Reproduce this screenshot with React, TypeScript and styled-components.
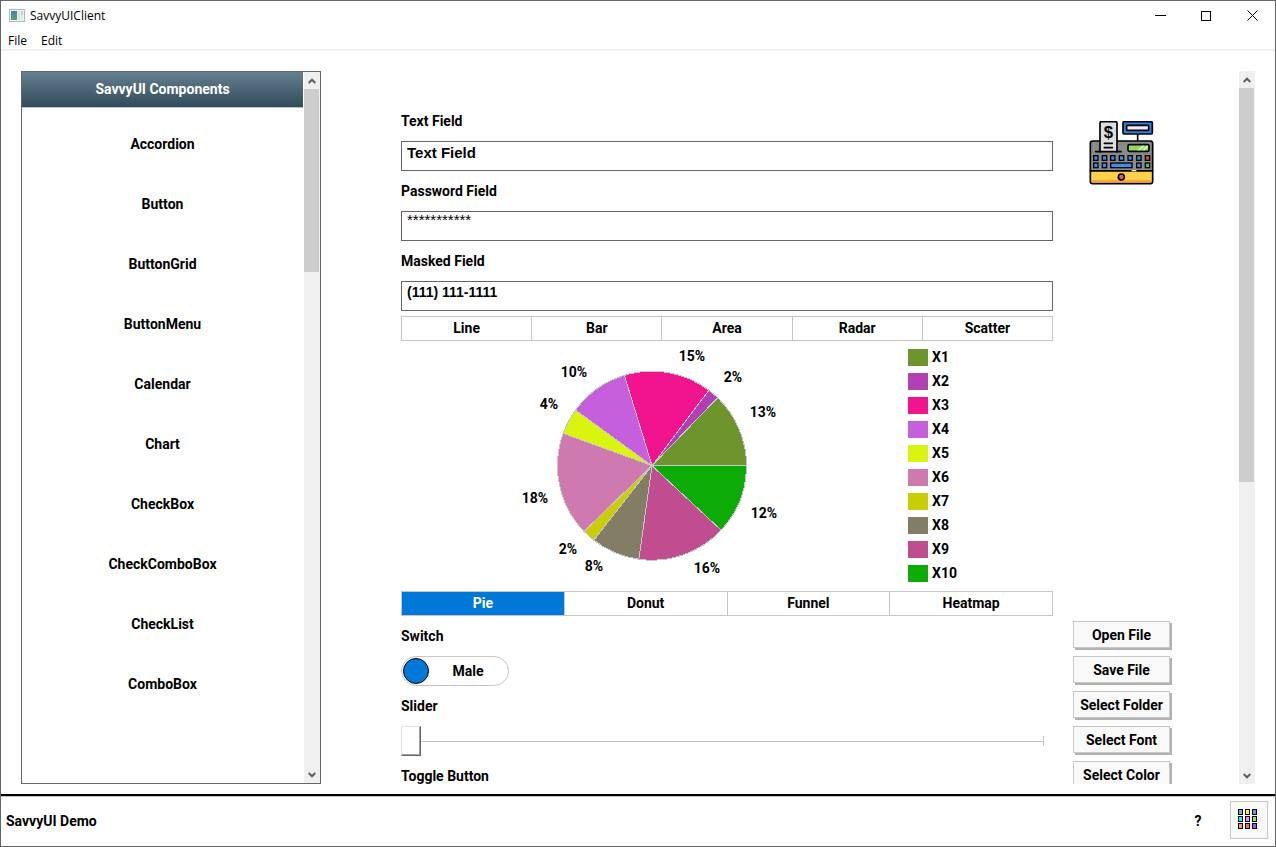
import React, { useState } from 'react';
import styled, { createGlobalStyle } from 'styled-components';

const line = '#c6c6c6';
const frame = '#666666';

const GlobalStyle = createGlobalStyle`
  *, *::before, *::after { box-sizing: border-box; }
  body { margin: 0; background: #fff; }
  button, input { font: inherit; color: inherit; margin: 0; padding: 0; border-radius: 0; }
`;

const Window = styled.div`
  display: flex;
  flex-direction: column;
  height: 100vh;
  border: 1px solid ${frame};
  background: #fff;
  color: #000;
  font: bold 14px/20px Roboto, "Liberation Sans", sans-serif;
`;

const TitleBar = styled.header`
  display: flex;
  align-items: center;
  height: 29px;
  padding-left: 8px;
  font: 12px/16px "Open Sans", "Noto Sans", sans-serif;
`;

const Title = styled.h1`
  flex: 1;
  margin: 0 0 0 5px;
  font: inherit;
`;

const WindowButton = styled.button`
  display: flex;
  align-items: center;
  justify-content: center;
  width: 46px;
  height: 29px;
  border: 0;
  background: none;
`;

const MenuBar = styled.nav`
  display: flex;
  gap: 14px;
  height: 21px;
  padding: 0 7px;
  border-bottom: 2px solid #f0f0f0;
  font: 12px/20px "Open Sans", "Noto Sans", sans-serif;
`;

const MenuButton = styled.button`
  height: 21px;
  border: 0;
  background: none;
`;

const Body = styled.div`
  display: flex;
  flex: 1;
  gap: 20px;
  min-height: 0;
  padding: 20px 20px 10px;
`;

const Sidebar = styled.aside`
  display: flex;
  flex: 0 0 300px;
  gap: 1px;
  border: 1px solid ${frame};
`;

const SidebarContent = styled.div`
  flex: 1;
  overflow: hidden;
  text-align: center;
`;

const SidebarTitle = styled.h2`
  height: 36px;
  margin: 0;
  border-bottom: 1px solid #b9c4ca;
  background: linear-gradient(#647f8e, #324b5a);
  color: #fff;
  font: inherit;
  line-height: 35px;
`;

const ComponentList = styled.ul`
  margin: 0;
  padding: 6px 0;
  list-style: none;
`;

const ComponentItem = styled.li`
  height: 60px;
  line-height: 60px;
`;

const ScrollTrack = styled.div`
  display: flex;
  flex-direction: column;
  flex: 0 0 16px;
  background: #f0f0f0;
`;

const ScrollButton = styled.button`
  display: flex;
  flex: 0 0 17px;
  align-items: center;
  justify-content: center;
  width: 15px;
  border: 0;
  background: none;
`;

const ScrollSpace = styled.div`
  flex: 1;
`;

const ScrollThumb = styled.div<{ $share: number }>`
  width: 15px;
  height: ${(p) => p.$share}%;
  background: #cdcdcd;
`;

const Main = styled.main`
  display: flex;
  flex: 1;
  min-width: 0;
`;

const Content = styled.div`
  display: grid;
  flex: 1;
  grid-template-columns: minmax(0, 1fr) 98px;
  align-content: start;
  column-gap: 20px;
  min-width: 0;
  padding: 30px 68px 0 60px;
  overflow: hidden;
`;

const Group = styled.section`
  min-width: 0;
`;

const FieldLabel = styled.label`
  display: block;
  line-height: 40px;
`;

const TextBox = styled.input<{ $size: number; $regular?: boolean }>`
  display: block;
  width: 100%;
  height: 30px;
  padding: 0 5px ${(p) => (p.$regular ? 14 : 8)}px;
  border: 1px solid ${frame};
  background: #fff;
  font: ${(p) => (p.$regular ? 'normal' : 'bold')} ${(p) => p.$size}px/20px "Liberation Sans", sans-serif;
`;

const Tabs = styled.div<{ $spaced?: boolean }>`
  display: flex;
  height: 25px;
  margin-top: ${(p) => (p.$spaced ? 5 : 0)}px;
  border: 1px solid ${line};
`;

const Tab = styled.button<{ $active?: boolean }>`
  flex: 1 1 0;
  padding-bottom: 1px;
  border: 0;
  background: ${(p) => (p.$active ? '#0078d7' : '#fff')};
  color: ${(p) => (p.$active ? '#fff' : '#000')};

  & + & { border-left: 1px solid ${line}; }
`;

const Chart = styled.div`
  display: flex;
  height: 250px;
`;

const PieArea = styled.div`
  display: flex;
  flex: 1;
  justify-content: center;
`;

const PieText = styled.text`
  text-anchor: middle;
  font: bold 14px Roboto, "Liberation Sans", sans-serif;
`;

const Legend = styled.ul`
  flex: 0 0 150px;
  margin: 0;
  padding: 4px 0 0 5px;
  list-style: none;
`;

const LegendItem = styled.li`
  display: flex;
  align-items: center;
  gap: 4px;
  height: 24px;
`;

const Swatch = styled.span<{ $color: string }>`
  width: 20px;
  height: 17px;
  background: ${(p) => p.$color};
`;

const Switch = styled.label<{ $on: boolean }>`
  position: relative;
  display: flex;
  flex-direction: ${(p) => (p.$on ? 'row-reverse' : 'row')};
  align-items: center;
  width: 108px;
  height: 30px;
  padding: 0 1px;
  border: 1px solid ${line};
  border-radius: 15px;
`;

const SwitchInput = styled.input`
  position: absolute;
  inset: 0;
  width: 100%;
  height: 100%;
  opacity: 0;
`;

const SwitchKnob = styled.span`
  width: 26px;
  height: 26px;
  border: 1px solid #000;
  border-radius: 50%;
  background: #0078d7;
`;

const SwitchText = styled.span`
  flex: 1;
  text-align: center;
`;

const SliderWrap = styled.div`
  padding-right: 9px;
`;

const Slider = styled.input`
  display: block;
  width: 100%;
  height: 30px;
  appearance: none;
  background:
    linear-gradient(${line}, ${line}) 0 15px / 100% 1px no-repeat,
    linear-gradient(${line}, ${line}) 100% 10px / 1px 10px no-repeat;

  &::-webkit-slider-thumb {
    appearance: none;
    width: 20px;
    height: 30px;
    border: 1px solid;
    border-color: #e3e3e3 #696969 #696969 #e3e3e3;
    background: #fff;
    box-shadow: inset -1px -1px #a0a0a0;
  }
`;

const Picture = styled.div`
  display: flex;
  justify-content: center;
  padding-top: 20px;
`;

const Actions = styled.div`
  display: flex;
  flex-direction: column;
  gap: 8px;
  padding: 5px 1px 0 0;
`;

const ActionButton = styled.button`
  height: 27px;
  border: 1px solid ${line};
  background: #f9f9f9;
  box-shadow: 2px 2px #b2b2b2;
  white-space: nowrap;
`;

const Footer = styled.footer`
  display: flex;
  align-items: center;
  height: 52px;
  padding: 0 7px 0 5px;
  border-top: 2px solid #000;
  box-shadow: inset 0 1px ${line};
`;

const FooterTitle = styled.span`
  flex: 1;
`;

const HelpButton = styled.button`
  width: 20px;
  height: 20px;
  margin-right: 22px;
  border: 0;
  background: none;
`;

const GridButton = styled.button`
  display: flex;
  align-items: center;
  justify-content: center;
  width: 38px;
  height: 38px;
  margin-bottom: 2px;
  padding: 0 4px 2px 0;
  border: 1px solid ${line};
  background: #f9f9f9;
`;

const components = [
  'Accordion', 'Button', 'ButtonGrid', 'ButtonMenu', 'Calendar',
  'Chart', 'CheckBox', 'CheckComboBox', 'CheckList', 'ComboBox',
];

// Each slice ends at `end` degrees, counter-clockwise from three o'clock.
const slices = [
  { name: 'X1', color: '#6e942e', share: '13%', end: 46, x: 261, y: 76 },
  { name: 'X2', color: '#b040b4', share: '2%', end: 53, x: 231, y: 41 },
  { name: 'X3', color: '#f2148f', share: '15%', end: 107, x: 190, y: 20 },
  { name: 'X4', color: '#c65fdc', share: '10%', end: 144, x: 72, y: 36 },
  { name: 'X5', color: '#daf410', share: '4%', end: 160, x: 47, y: 68 },
  { name: 'X6', color: '#cf79b1', share: '18%', end: 224, x: 33, y: 162 },
  { name: 'X7', color: '#c9cd04', share: '2%', end: 232, x: 66, y: 213 },
  { name: 'X8', color: '#847d66', share: '8%', end: 262, x: 92, y: 230 },
  { name: 'X9', color: '#c04d8f', share: '16%', end: 317, x: 205, y: 232 },
  { name: 'X10', color: '#0dab06', share: '12%', end: 360, x: 262, y: 177 },
];

function slicePath(start: number, end: number) {
  const point = (deg: number) => {
    const a = (deg * Math.PI) / 180;
    return `${150 + 94.5 * Math.cos(a)} ${124.7 - 94.5 * Math.sin(a)}`;
  };
  return `M150 124.7 L${point(start)} A94.5 94.5 0 0 0 ${point(end)} Z`;
}

function Pie() {
  return (
    <svg width="300" height="250" viewBox="0 0 300 250" role="img" aria-label="Pie chart">
      {slices.map((s, i) => (
        <path
          key={s.name}
          d={slicePath(i ? slices[i - 1].end : 0, s.end)}
          fill={s.color}
          stroke="#c6c6c6"
          shapeRendering="crispEdges"
        />
      ))}
      {slices.map((s) => (
        <PieText key={s.name} x={s.x} y={s.y}>{s.share}</PieText>
      ))}
    </svg>
  );
}

function AppIcon() {
  return (
    <svg width="16" height="14" viewBox="0 0 16 14" aria-hidden="true">
      <defs>
        <linearGradient id="pane" x1="0" y1="0" x2="0" y2="1">
          <stop offset="0" stopColor="#4b7fae" />
          <stop offset="1" stopColor="#55a377" />
        </linearGradient>
      </defs>
      <rect x="0.5" y="0.5" width="15" height="12" fill="#eef0f2" stroke="#b3b9c2" />
      <rect x="2" y="2" width="6" height="9" fill="url(#pane)" />
      <rect x="9" y="2" width="2" height="9" fill="#dde0e3" />
      <rect x="12" y="2" width="2" height="4" fill="#b5d5cf" />
      <rect x="12" y="6" width="2" height="5" fill="#e2e4e6" />
    </svg>
  );
}

function Chevron({ down }: { down?: boolean }) {
  return (
    <svg width="8" height="6" viewBox="0 0 8 6" aria-hidden="true">
      <path d={down ? 'M0.7 1 L4 4.3 L7.3 1' : 'M0.7 5 L4 1.7 L7.3 5'} fill="none" stroke="#606060" strokeWidth="2" />
    </svg>
  );
}

function ScrollBar({ share }: { share: number }) {
  return (
    <ScrollTrack>
      <ScrollButton aria-label="Scroll up"><Chevron /></ScrollButton>
      <ScrollSpace><ScrollThumb $share={share} /></ScrollSpace>
      <ScrollButton aria-label="Scroll down"><Chevron down /></ScrollButton>
    </ScrollTrack>
  );
}

function CashRegister() {
  const keys = [47, 73, 98, 124, 150, 176, 202];
  return (
    <svg width="66" height="66" viewBox="27 34 198 198" role="img" aria-label="Cash register">
      <g stroke="#000" strokeWidth="5" strokeLinejoin="round" strokeLinecap="round">
        <path d="M173 72 V94" />
        <rect x="129" y="36" width="88" height="37" rx="4" fill="#2f80e4" />
        <rect x="140" y="47" width="66" height="15" fill="#f3e9f0" />
        <path d="M31 184 V101 Q31 94 38 94 H211 Q218 94 218 101 V184 Z" fill="#8b8b8b" />
        <path d="M31 184 H218 V215 Q218 222 211 222 H38 Q31 222 31 215 Z" fill="#ffd04a" />
        <path d="M35 215 H214" stroke="#ff9a3c" strokeWidth="7" strokeLinecap="butt" />
        <path d="M60 126 V40 Q60 36 64 36 H107 Q111 36 111 40 V126" fill="#dedede" />
        <path d="M47 126 H123 M73 101 H97 M73 114 H97" fill="none" />
        <rect x="144" y="105" width="63" height="20" rx="4" fill="#8ae05a" />
        <circle cx="124" cy="202" r="9" fill="#f2603a" />
      </g>
      <path d="M172 122 L187 108 H194 L180 122 Z M186 122 L200 108 H204 V112 L194 122 Z" fill="#d8f5c6" />
      <path d="M155 183 H169" stroke="#ffe9a6" strokeWidth="4" />
      <g stroke="#000" strokeWidth="4">
        {keys.map((x) => (
          <rect key={x} x={x - 6} y="138" width="13" height="14" fill={x === 202 ? '#e8443a' : '#3f8fe8'} />
        ))}
        {keys.filter((x) => x < 90 || x > 160).map((x) => (
          <rect key={x} x={x - 6} y="160" width="13" height="14" fill={x === 202 ? '#4dbb5a' : '#3f8fe8'} />
        ))}
        <rect x="92" y="160" width="64" height="14" fill="#3f8fe8" />
      </g>
      <text x="85" y="85" textAnchor="middle" fontFamily="Liberation Sans, sans-serif" fontWeight="bold" fontSize="50">$</text>
    </svg>
  );
}

function GridIcon() {
  const colors = ['#74b5b5', '#ffff00', '#50a0f0', '#00ffff', '#ff80ff', '#70f070', '#ffa03c', '#ff6464', '#a050ff'];
  return (
    <svg width="19" height="20" viewBox="0 0 19 20" shapeRendering="crispEdges" aria-hidden="true">
      {colors.map((c, i) => (
        <rect key={c} x={(i % 3) * 7 + 0.5} y={Math.floor(i / 3) * 7 + 0.5} width="4" height="5" fill={c} stroke="#000" />
      ))}
    </svg>
  );
}

export default function App() {
  const [on, setOn] = useState(false);
  return (
    <Window>
      <GlobalStyle />
      <TitleBar>
        <AppIcon />
        <Title>SavvyUIClient</Title>
        <WindowButton aria-label="Minimize">
          <svg width="11" height="11"><path d="M0 5.5 H11" stroke="#000" /></svg>
        </WindowButton>
        <WindowButton aria-label="Maximize">
          <svg width="10" height="10"><rect x="0.5" y="0.5" width="9" height="9" fill="none" stroke="#000" /></svg>
        </WindowButton>
        <WindowButton aria-label="Close">
          <svg width="11" height="11"><path d="M0.5 0.5 L10.5 10.5 M10.5 0.5 L0.5 10.5" stroke="#000" /></svg>
        </WindowButton>
      </TitleBar>
      <MenuBar>
        <MenuButton>File</MenuButton>
        <MenuButton>Edit</MenuButton>
      </MenuBar>
      <Body>
        <Sidebar>
          <SidebarContent>
            <SidebarTitle>SavvyUI Components</SidebarTitle>
            <ComponentList>
              {components.map((c) => <ComponentItem key={c}>{c}</ComponentItem>)}
            </ComponentList>
          </SidebarContent>
          <ScrollBar share={27} />
        </Sidebar>
        <Main>
          <Content>
            <Group>
              <FieldLabel htmlFor="text">Text Field</FieldLabel>
              <TextBox id="text" $size={15} defaultValue="Text Field" />
              <FieldLabel htmlFor="password">Password Field</FieldLabel>
              <TextBox id="password" $size={15} $regular defaultValue="***********" />
              <FieldLabel htmlFor="masked">Masked Field</FieldLabel>
              <TextBox id="masked" $size={14} defaultValue="(111) 111-1111" />
              <Tabs $spaced>
                {['Line', 'Bar', 'Area', 'Radar', 'Scatter'].map((t) => <Tab key={t}>{t}</Tab>)}
              </Tabs>
              <Chart>
                <PieArea><Pie /></PieArea>
                <Legend>
                  {slices.map((s) => (
                    <LegendItem key={s.name}><Swatch $color={s.color} />{s.name}</LegendItem>
                  ))}
                </Legend>
              </Chart>
              <Tabs>
                {['Pie', 'Donut', 'Funnel', 'Heatmap'].map((t) => <Tab key={t} $active={t === 'Pie'}>{t}</Tab>)}
              </Tabs>
            </Group>
            <Picture><CashRegister /></Picture>
            <Group>
              <FieldLabel htmlFor="switch">Switch</FieldLabel>
              <Switch $on={on}>
                <SwitchInput id="switch" type="checkbox" role="switch" checked={on} onChange={() => setOn(!on)} />
                <SwitchKnob />
                <SwitchText>Male</SwitchText>
              </Switch>
              <FieldLabel htmlFor="slider">Slider</FieldLabel>
              <SliderWrap><Slider id="slider" type="range" defaultValue={0} /></SliderWrap>
              <FieldLabel as="div">Toggle Button</FieldLabel>
            </Group>
            <Actions>
              {['Open File', 'Save File', 'Select Folder', 'Select Font', 'Select Color'].map((a) => (
                <ActionButton key={a}>{a}</ActionButton>
              ))}
            </Actions>
          </Content>
          <ScrollBar share={58} />
        </Main>
      </Body>
      <Footer>
        <FooterTitle>SavvyUI Demo</FooterTitle>
        <HelpButton aria-label="Help">?</HelpButton>
        <GridButton aria-label="Open component grid"><GridIcon /></GridButton>
      </Footer>
    </Window>
  );
}
